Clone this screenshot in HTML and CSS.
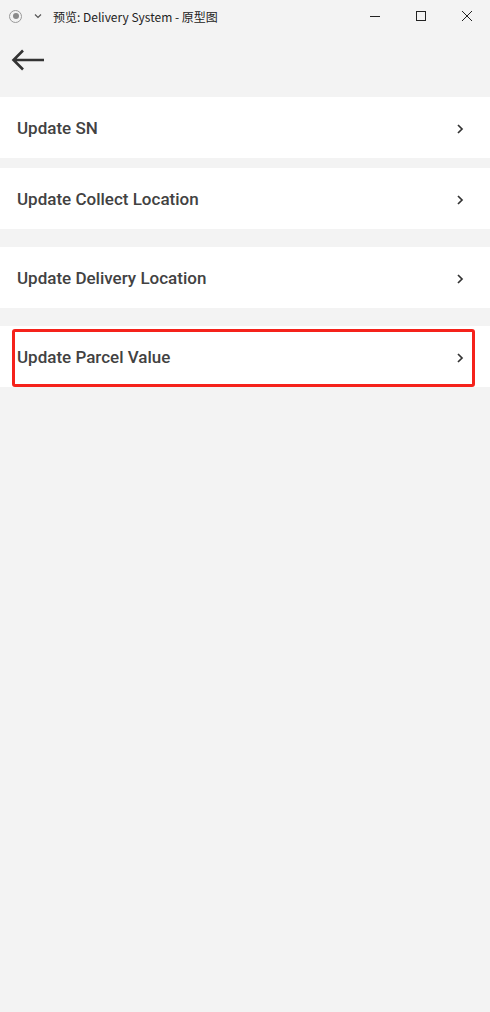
FILE: index.html
```html
<!DOCTYPE html>
<html lang="en">
<head>
    <meta charset="UTF-8">
    <meta name="viewport" content="width=device-width, initial-scale=1.0">
    <title>预览: Delivery System - 原型图</title>
    <link rel="stylesheet" href="styles.css">
</head>
<body>
    <!-- Barra de ventana -->
    <div class="titlebar">
        <div class="title-left">
            <span class="rec-icon"><span class="rec-dot"></span></span>
            <svg class="drop-icon" width="10" height="10" viewBox="0 0 10 10">
                <path d="M2 3.5 L5 6.5 L8 3.5" fill="none" stroke="#555" stroke-width="1.2"/>
            </svg>
            <span class="title-text">预览: Delivery System - 原型图</span>
        </div>
        <div class="win-controls">
            <svg width="12" height="12" viewBox="0 0 12 12"><path d="M1 6.5 H11" stroke="#222" stroke-width="1"/></svg>
            <svg width="12" height="12" viewBox="0 0 12 12"><rect x="1.5" y="1.5" width="9" height="9" fill="none" stroke="#222" stroke-width="1"/></svg>
            <svg width="12" height="12" viewBox="0 0 12 12"><path d="M1 1 L11 11 M11 1 L1 11" stroke="#222" stroke-width="1"/></svg>
        </div>
    </div>

    <!-- Cabecera -->
    <div class="header">
        <svg class="back-icon" width="34" height="24" viewBox="0 0 34 24">
            <path d="M2.5 12 H33 M12 2.5 L2.5 12 L12 21.5" fill="none" stroke="#333" stroke-width="2.6"/>
        </svg>
    </div>

    <!-- Menu -->
    <div class="menu">
        <div class="menu-item">
            <span>Update SN</span>
            <svg class="chevron" width="8" height="12" viewBox="0 0 8 12"><path d="M2 2 L6 6 L2 10" fill="none" stroke="#333" stroke-width="1.7"/></svg>
        </div>
        <div class="menu-item">
            <span>Update Collect Location</span>
            <svg class="chevron" width="8" height="12" viewBox="0 0 8 12"><path d="M2 2 L6 6 L2 10" fill="none" stroke="#333" stroke-width="1.7"/></svg>
        </div>
        <div class="menu-item">
            <span>Update Delivery Location</span>
            <svg class="chevron" width="8" height="12" viewBox="0 0 8 12"><path d="M2 2 L6 6 L2 10" fill="none" stroke="#333" stroke-width="1.7"/></svg>
        </div>
        <div class="menu-item selected">
            <span>Update Parcel Value</span>
            <svg class="chevron" width="8" height="12" viewBox="0 0 8 12"><path d="M2 2 L6 6 L2 10" fill="none" stroke="#333" stroke-width="1.7"/></svg>
            <div class="highlight"></div>
        </div>
    </div>
</body>
</html>
```

FILE: styles.css
```css
body {
    margin: 0;
    padding: 0;
    background-color: #f3f3f3;
    font-family: 'Roboto', 'Noto Sans CJK SC', sans-serif;
    color: #333333;
}
.titlebar {
    height: 32px;
    display: flex;
    align-items: center;
    justify-content: space-between;
    background-color: #f3f3f3;
}
.title-left {
    display: flex;
    align-items: center;
    padding-left: 9px;
}
.rec-icon {
    width: 13px;
    height: 13px;
    border: 1px solid #9a9a9a;
    border-radius: 50%;
    display: flex;
    align-items: center;
    justify-content: center;
    box-sizing: border-box;
}
.rec-dot {
    width: 6px;
    height: 6px;
    border-radius: 50%;
    background-color: #8a8a8a;
}
.drop-icon {
    margin-left: 11px;
}
.title-text {
    margin-left: 10px;
    font-family: 'Noto Sans CJK SC', sans-serif;
    font-size: 12px;
    color: #222;
}
.win-controls {
    display: flex;
    gap: 34px;
    padding-right: 17px;
}
.header {
    height: 65px;
    display: flex;
    align-items: center;
    padding-left: 11px;
}
.back-icon {
    margin-top: -9px;
}
.menu-item {
    position: relative;
    height: 61px;
    display: flex;
    align-items: center;
    justify-content: space-between;
    padding: 0 26px 0 17px;
    background-color: #ffffff;
    margin-bottom: 18px;
    font-size: 17px;
    font-weight: 500;
    color: #424242;
}
.menu-item:first-child {
    margin-bottom: 10px;
}
.menu-item .chevron {
    margin-top: 2px;
}
.highlight {
    position: absolute;
    top: 3px;
    left: 12px;
    right: 15px;
    bottom: 0;
    border: 3px solid #f5221b;
    border-radius: 3px;
}
```
